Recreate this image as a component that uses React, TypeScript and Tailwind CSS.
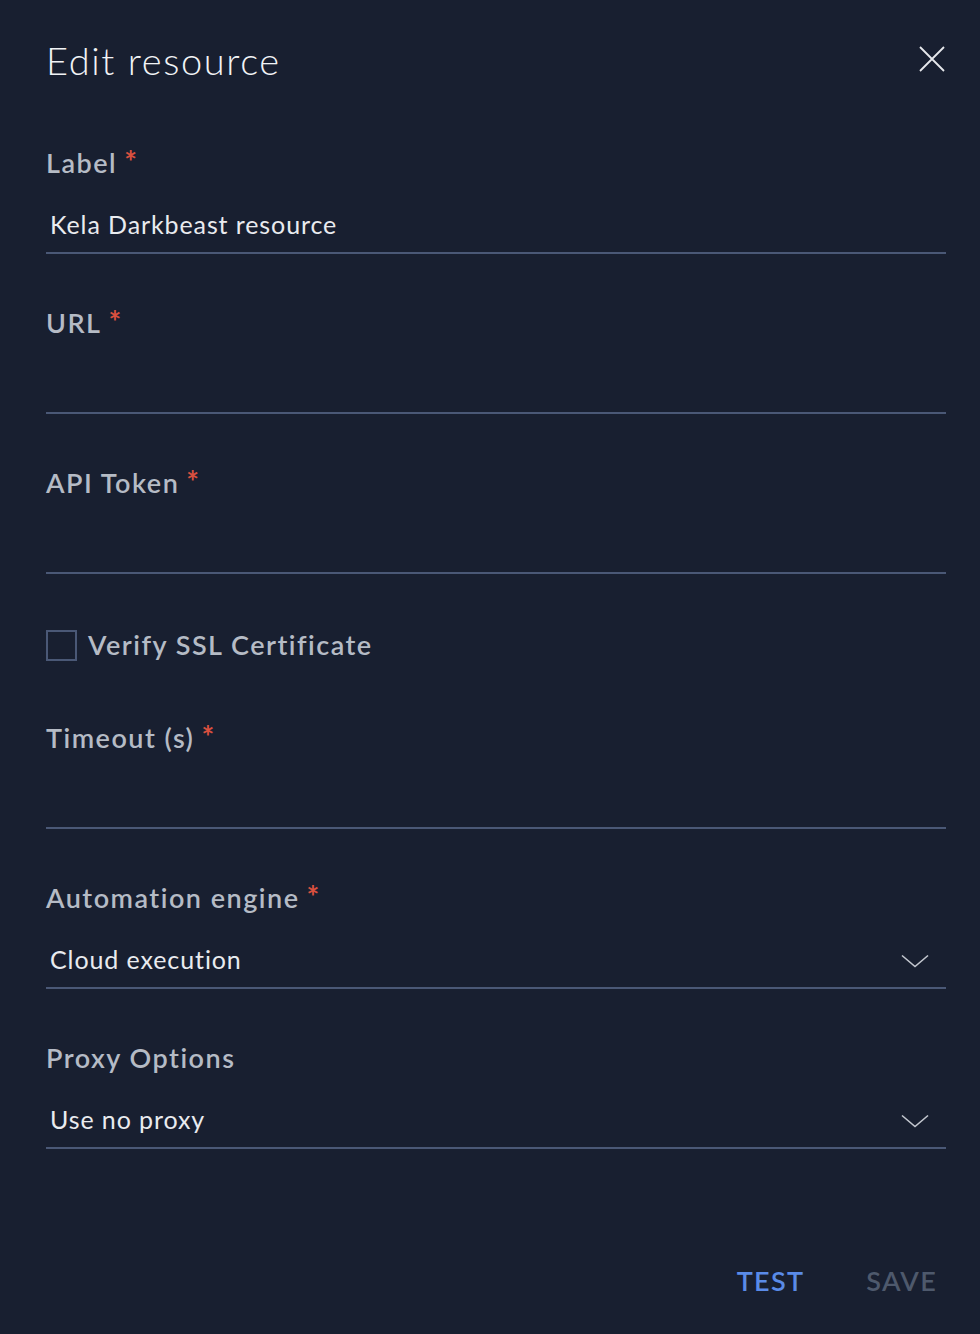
import React from 'react';

// ─── helpers ────────────────────────────────────────────────────────────────
function Chevron() {
  return (
    <svg width="28" height="14" viewBox="0 0 28 14" fill="none" className="text-[#c3c7cf]">
      <path d="M1 1.5 L14 12.5 L27 1.5" stroke="currentColor" strokeWidth="1.6" />
    </svg>
  );
}

function CloseIcon() {
  return (
    <svg width="26" height="26" viewBox="0 0 26 26" fill="none" className="text-[#e6e8ec]">
      <path d="M1 1 L25 25 M25 1 L1 25" stroke="currentColor" strokeWidth="1.8" />
    </svg>
  );
}

interface FieldProps {
  label: string;
  required?: boolean;
  value?: string;
  select?: boolean;
}

function Field({ label, required, value, select }: FieldProps) {
  return (
    <div className="flex flex-col">
      <div className="h-[32px] flex items-center text-[27px] font-semibold tracking-[1.5px] text-[#b5bbc5]">
        {label}
        {required && <span className="ml-[7px] text-[#d9503f] text-[30px] font-bold -mt-[4px]">*</span>}
      </div>
      <div className="mt-[20px] h-[55px] flex items-center justify-between border-b-2 border-[#4a5876] pl-[4px] pr-[17px]">
        <span className="text-[25px] text-[#e9ebef] tracking-[0.9px] -mt-[2px]">{value}</span>
        {select && <Chevron />}
      </div>
    </div>
  );
}

// ─── Main export ─────────────────────────────────────────────────────────────
export default function App() {
  return (
    <div
      className="w-[980px] h-[1334px] bg-[#181f30] flex flex-col pl-[46px] pr-[34px]"
      style={{ fontFamily: 'Lato, "Noto Sans", sans-serif' }}
    >
      <div className="mt-[36px] h-[48px] flex items-center justify-between">
        <h1 className="text-[38px] font-light tracking-[1.6px] text-[#f1f3f6] leading-[48px]">Edit resource</h1>
        <div className="mr-[1px] mt-[-2px]">
          <CloseIcon />
        </div>
      </div>

      <div className="mt-[63px] flex flex-col gap-[53px]">
        <Field label="Label" required value="Kela Darkbeast resource" />
        <Field label="URL" required />
        <Field label="API Token" required />
      </div>

      <label className="mt-[55px] h-[32px] flex items-center gap-[11px]">
        <span className="w-[31px] h-[31px] border-2 border-[#4a5876]" />
        <span className="text-[27px] font-semibold tracking-[1.5px] text-[#b5bbc5]">Verify SSL Certificate</span>
      </label>

      <div className="mt-[61px] flex flex-col gap-[53px]">
        <Field label="Timeout (s)" required />
        <Field label="Automation engine" required value="Cloud execution" select />
        <Field label="Proxy Options" value="Use no proxy" select />
      </div>

      <div className="mt-[112px] flex justify-end gap-[62px] pr-[9px]">
        <button className="text-[27px] font-semibold tracking-[1.3px] text-[#5a8be8]">TEST</button>
        <button className="text-[27px] font-semibold tracking-[1.3px] text-[#4e596c]">SAVE</button>
      </div>
    </div>
  );
}
